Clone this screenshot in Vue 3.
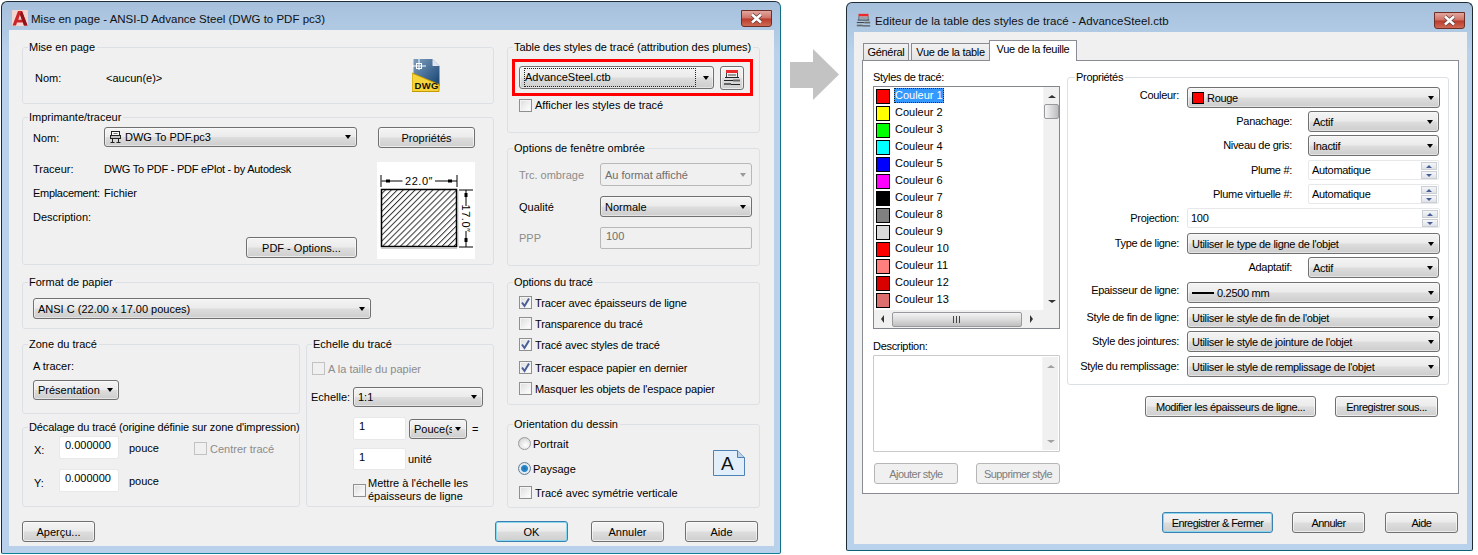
<script setup>
const swatches = ['#ff0000','#ffff00','#00ff00','#00ffff','#0000ff','#ff00ff','#000000','#808080','#d9d9d9','#ff0000','#ff7f7f','#d90000','#dd6f6f','#ffffff']
const colours = swatches.map((c, i) => ({ name: 'Couleur ' + (i + 1), c }))
const props = [
  { label: 'Couleur:', kind: 'combo', size: 'wide', val: 'Rouge', h: 24, lift: true, swatch: true },
  { label: 'Panachage:', kind: 'combo', size: 'narrow', val: 'Actif', h: 24 },
  { label: 'Niveau de gris:', kind: 'combo', size: 'narrow', val: 'Inactif', h: 25 },
  { label: 'Plume #:', kind: 'spin', size: 'narrow', val: 'Automatique', h: 24 },
  { label: 'Plume virtuelle #:', kind: 'spin', size: 'narrow', val: 'Automatique', h: 24 },
  { label: 'Projection:', kind: 'spin', size: 'wide', val: '100', h: 25 },
  { label: 'Type de ligne:', kind: 'combo', size: 'wide', val: "Utiliser le type de ligne de l'objet", h: 24 },
  { label: 'Adaptatif:', kind: 'combo', size: 'narrow', val: 'Actif', h: 25 },
  { label: 'Epaisseur de ligne:', kind: 'combo', size: 'wide', val: '0.2500 mm', h: 25, lift: true, line: true },
  { label: 'Style de fin de ligne:', kind: 'combo', size: 'wide', val: "Utiliser le style de fin de l'objet", h: 24 },
  { label: 'Style des jointures:', kind: 'combo', size: 'wide', val: "Utiliser le style de jointure de l'objet", h: 25 },
  { label: 'Style du remplissage:', kind: 'combo', size: 'wide', val: "Utiliser le style de remplissage de l'objet", h: 21 }
]
const traceOpts = [
  { t: 'Tracer avec épaisseurs de ligne', on: true },
  { t: 'Transparence du tracé', on: false },
  { t: 'Tracé avec styles de tracé', on: true },
  { t: 'Tracer espace papier en dernier', on: true, gap: true },
  { t: "Masquer les objets de l'espace papier", on: false }
]
</script>

<template>
  <div class="desk">
    <svg class="defs" width="0" height="0" aria-hidden="true">
      <symbol id="plotter" viewBox="0 0 13 13">
        <rect x="2.500" y=".5" width="8" height="4" fill="#fff" stroke="#222"/>
        <rect x="1.500" y="4.500" width="10" height="3" fill="#c4c4c4" stroke="#222"/>
        <path d="M3.500 7.500v4M9.500 7.500v4M1.500 11.500h4M7.500 11.500h4" fill="none" stroke="#222"/>
        <path d="M4.500 2.500h4" stroke="#777" fill="none"/>
      </symbol>
      <symbol id="plotter-red" viewBox="0 0 18 18">
        <rect x="3" y="1" width="12" height="3" fill="#ec2a2a"/>
        <path d="M3.500 4v4M14.500 4v4" stroke="#444" fill="none"/>
        <rect x="5" y="5" width="8" height="2" fill="#9a9a9a"/>
        <path d="M2 8.500h14" stroke="#222" fill="none"/>
        <path d="M1 11.500h9" stroke="#222" fill="none"/>
        <path d="M10 11.500h7" stroke="#666" stroke-width="2" fill="none"/>
        <path d="M1 15h7" stroke="#666" stroke-width="2" fill="none"/>
        <path d="M8 15.500h9" stroke="#222" fill="none"/>
      </symbol>
      <symbol id="tick" viewBox="0 0 13 13">
        <path d="M3 6.500 5.500 10 10 2.500" fill="none" stroke="#4a5f97" stroke-width="2"/>
      </symbol>
    </svg>

    <!-- LEFT WINDOW -->
    <section class="win win-a">
      <header class="titlebar tb-a">
        <svg class="app-logo" width="16" height="16" viewBox="0 0 16 16">
          <rect width="16" height="16" rx="1" fill="#f3d6d0"/>
          <path d="M0.500 15.500 6 1h4l5.500 14.500h-3.500l-1-3H5l-1 3Z" fill="#c8242a"/>
          <path d="M6.200 9.700h3.600L8 4.600Z" fill="#f4c9c4"/>
          <path d="M10 1l5.500 14.500h-3.500L8 4.600Z" fill="#8e1418"/>
        </svg>
        <span class="ttl">Mise en page - ANSI-D Advance Steel (DWG to PDF pc3)</span>
        <button class="close close-a"><svg width="15" height="11" viewBox="0 0 15 11"><path d="M3 1.500 12 9.500M12 1.500 3 9.500" stroke="#5a3c3c" stroke-width="4"/><path d="M3 1.500 12 9.500M12 1.500 3 9.500" stroke="#fff" stroke-width="2.600"/></svg></button>
      </header>
      <div class="client client-a">
        <div class="cols">
          <div class="col col-l">
            <div class="grp g-page">
              <span class="legend">Mise en page</span>
              <span class="pg-lab">Nom:</span>
              <span class="pg-val">&lt;aucun(e)&gt;</span>
              <svg class="dwg" width="29" height="33" viewBox="0 0 29 33">
                <defs><linearGradient id="dwgb" x1="0" y1="0" x2="1" y2="1"><stop offset="0" stop-color="#7f9fbe"/><stop offset="1" stop-color="#123f70"/></linearGradient></defs>
                <path d="M1.500 0h19l7 7v20h-26Z" fill="url(#dwgb)"/>
                <path d="M20.500 0l7 7h-7Z" fill="#dfe6ee"/>
                <path d="M7 0v11M0 7h14" stroke="#fff"/>
                <rect x="4.500" y="4.500" width="5" height="5" fill="none" stroke="#fff"/>
                <path d="M0 14 27 25.500V32.500H0Z" fill="#f7d53a" stroke="#c49a00"/>
                <text x="2.500" y="30" class="dwg-t">DWG</text>
              </svg>
            </div>

            <div class="grp g-printer">
              <span class="legend">Imprimante/traceur</span>
              <span class="lab pr-nom">Nom:</span>
              <div class="combo pr-combo"><svg class="pl-i" width="13" height="13"><use href="#plotter"/></svg><span class="cv">DWG To PDF.pc3</span><i class="caret"></i></div>
              <button class="btn pr-btn">Propriétés</button>
              <span class="lab pr-l2">Traceur:</span>
              <span class="lab pr-v2">DWG To PDF - PDF ePlot - by Autodesk</span>
              <span class="lab pr-l3">Emplacement:</span>
              <span class="lab pr-v3">Fichier</span>
              <span class="lab pr-l4">Description:</span>
              <button class="btn pr-opt">PDF - Options...</button>
              <svg class="preview" width="98" height="97" viewBox="0 0 98 97">
                <defs>
                  <pattern id="hatch" width="4.200" height="4.200" patternUnits="userSpaceOnUse" patternTransform="rotate(45)">
                    <rect width="4.200" height="4.200" fill="#fff"/><rect width="1" height="4.200" fill="#333"/>
                  </pattern>
                </defs>
                <rect width="98" height="97" fill="#fff"/>
                <rect x="4.500" y="27.500" width="75" height="57" fill="url(#hatch)" stroke="#000" stroke-width="1.500"/>
                <path d="M4 86.500h76M81 28v57" stroke="#000" stroke-width="1" fill="none" opacity=".2"/>
                <path d="M4 13v12M80 13v12M4.500 19h21M58 19h22M82 28h14M82 85h14M89 28v16M89 69v16" stroke="#000" fill="none"/>
                <rect x="9" y="17.500" width="4" height="3" fill="#000"/><rect x="71" y="17.500" width="4" height="3" fill="#000"/>
                <rect x="87.500" y="31" width="3" height="4" fill="#000"/><rect x="87.500" y="76" width="3" height="4" fill="#000"/>
                <text x="42" y="23" class="dim" text-anchor="middle">22.0″</text>
                <text class="dim" text-anchor="middle" transform="translate(85 56.500) rotate(90)">17.0″</text>
              </svg>
            </div>

            <div class="grp g-format">
              <span class="legend">Format de papier</span>
              <div class="combo fm-combo"><span class="cv">ANSI C (22.00 x 17.00 pouces)</span><i class="caret"></i></div>
            </div>

            <div class="split">
              <div class="col">
                <div class="grp g-zone">
                  <span class="legend">Zone du tracé</span>
                  <div class="lab zn-lab">A tracer:</div>
                  <div class="combo zn-combo"><span class="cv">Présentation</span><i class="caret"></i></div>
                </div>
                <div class="grp g-offset">
                  <span class="legend tight">Décalage du tracé (origine définie sur zone d'impression)</span>
                  <span class="lab of-l">X:</span><span class="input of-in">0.000000</span><span class="lab of-u">pouce</span>
                  <label class="chk of-chk off"><span class="box"></span><span>Centrer tracé</span></label>
                  <span class="lab of-l">Y:</span><span class="input of-in">0.000000</span><span class="lab of-u">pouce</span>
                </div>
              </div>
              <div class="grp g-scale">
                <span class="legend">Echelle du tracé</span>
                <label class="chk sc-fit off"><span class="box"></span><span>A la taille du papier</span></label>
                <div class="sc-row sc-r1"><span class="lab sc-lab">Echelle:</span><div class="combo sc-combo"><span class="cv">1:1</span><i class="caret"></i></div></div>
                <div class="sc-row sc-r2"><span class="input sc-in">1</span><div class="combo sc-unit"><span class="cv">Pouce(s)</span><i class="caret"></i></div><span class="lab sc-eq">=</span></div>
                <div class="sc-row sc-r3"><span class="input sc-in2">1</span><span class="lab sc-un">unité</span></div>
                <label class="chk sc-lw"><span class="box"></span><span class="two">Mettre à l'échelle les<br>épaisseurs de ligne</span></label>
              </div>
            </div>
          </div>

          <div class="col col-r">
            <div class="grp g-table">
              <span class="legend">Table des styles de tracé (attribution des plumes)</span>
              <div class="redbox">
                <div class="combo tb-combo"><span class="focus">AdvanceSteel.ctb</span><i class="caret"></i></div>
                <button class="btn tb-btn"><svg width="18" height="18"><use href="#plotter-red"/></svg></button>
              </div>
              <label class="chk tb-chk"><span class="box"></span><span>Afficher les styles de tracé</span></label>
            </div>

            <div class="grp g-shade">
              <span class="legend">Options de fenêtre ombrée</span>
              <span class="lab muted">Trc. ombrage</span>
              <div class="combo dis sh-h1"><span class="cv">Au format affiché</span><i class="caret"></i></div>
              <span class="lab">Qualité</span>
              <div class="combo sh-h2"><span class="cv">Normale</span><i class="caret"></i></div>
              <span class="lab muted">PPP</span>
              <span class="input dis sh-h3">100</span>
            </div>

            <div class="grp g-opts">
              <span class="legend">Options du tracé</span>
              <label v-for="o in traceOpts" :key="o.t" class="chk op-row" :class="{ 'op-gap': o.gap }">
                <span class="box"><svg v-if="o.on" width="13" height="13"><use href="#tick"/></svg></span><span>{{ o.t }}</span>
              </label>
            </div>

            <div class="grp g-orient">
              <span class="legend">Orientation du dessin</span>
              <div class="or-list">
                <label class="radio or-row"><span class="dot"></span><span>Portrait</span></label>
                <label class="radio or-row on"><span class="dot"></span><span>Paysage</span></label>
                <label class="chk or-row or-last"><span class="box"></span><span>Tracé avec symétrie verticale</span></label>
              </div>
              <svg class="a-doc" width="32" height="26" viewBox="0 0 32 26">
                <path d="M.5.500h24l7 7v18H.5Z" fill="#e2effa" stroke="#4f81b5"/>
                <path d="M24.500.500v7h7" fill="#bcd3e8" stroke="#4f81b5"/>
                <text x="8" y="19.500" class="a-t">A</text>
              </svg>
            </div>
          </div>
        </div>
        <footer class="foot foot-a">
          <button class="btn w73">Aperçu...</button>
          <button class="btn w73 dflt ok">OK</button>
          <button class="btn w73 g23">Annuler</button>
          <button class="btn w73 g21">Aide</button>
        </footer>
      </div>
    </section>

    <svg class="arrow" width="49" height="51" viewBox="0 0 49 51"><path d="M0 13h23V0l26 25.500L23 51V39H0Z" fill="#c3c3c3"/></svg>

    <!-- RIGHT WINDOW -->
    <section class="win win-b">
      <header class="titlebar tb-b">
        <svg class="tb-icon" width="15" height="15"><use href="#plotter-red"/></svg>
        <span class="ttl ttl-b">Editeur de la table des styles de tracé - AdvanceSteel.ctb</span>
        <button class="close close-b"><svg width="15" height="11" viewBox="0 0 15 11"><path d="M3 1.500 12 9.500M12 1.500 3 9.500" stroke="#5a3c3c" stroke-width="4"/><path d="M3 1.500 12 9.500M12 1.500 3 9.500" stroke="#fff" stroke-width="2.600"/></svg></button>
      </header>
      <div class="client client-b">
        <div class="tabs">
          <span class="tab t1">Général</span>
          <span class="tab t2">Vue de la table</span>
          <span class="tab t3">Vue de la feuille</span>
        </div>
        <div class="panel">
          <div class="p-left">
            <div class="p-lab">Styles de tracé:</div>
            <div class="list">
              <div class="list-items">
                <div v-for="(c, i) in colours" :key="c.name" class="li">
                  <span class="sw" :style="{ background: c.c }"></span>
                  <span v-if="i < 13" class="li-t" :class="{ sel: i === 0 }">{{ c.name }}</span>
                </div>
              </div>
              <div class="vbar">
                <i class="up"></i><span class="vthumb"></span><i class="dn dn-end"></i>
              </div>
              <div class="hbar">
                <i class="lf"></i><span class="hthumb">
                  <svg width="9" height="7"><path d="M.5 0v7M3.500 0v7M6.500 0v7" stroke="#444"/></svg>
                </span><i class="rt"></i>
              </div>
              <div class="corner"></div>
            </div>
            <div class="p-lab p-desc">Description:</div>
            <div class="descr"><div class="vbar dv"><i class="up dim-a"></i><i class="dn dn-end dim-a"></i></div></div>
            <div class="p-btns">
              <button class="btn off-btn">Ajouter style</button>
              <button class="btn off-btn">Supprimer style</button>
            </div>
          </div>
          <div class="p-right">
            <div class="grp g-props white">
              <span class="legend">Propriétés</span>
              <div v-for="r in props" :key="r.label" class="prow" :class="r.size" :style="{ height: r.h + 'px' }">
                <span class="plab" :class="{ lift: r.lift }">{{ r.label }}</span>
                <div v-if="r.kind === 'combo'" class="combo pctl">
                  <span v-if="r.swatch" class="rsw"></span>
                  <span v-if="r.line" class="rline"></span>
                  <span class="cv">{{ r.val }}</span><i class="caret"></i>
                </div>
                <div v-else class="input pctl spin">
                  <span>{{ r.val }}</span>
                  <span class="spins"><b class="s-up"></b><b class="s-dn"></b></span>
                </div>
              </div>
            </div>
            <div class="p-acts">
              <button class="btn act1">Modifier les épaisseurs de ligne...</button>
              <button class="btn act2">Enregistrer sous...</button>
            </div>
          </div>
        </div>
        <footer class="foot foot-b">
          <button class="btn dflt save">Enregistrer &amp; Fermer</button>
          <button class="btn w73 g19">Annuler</button>
          <button class="btn w73 g20">Aide</button>
        </footer>
      </div>
    </section>
  </div>
</template>

<style>
html, body { margin: 0; background: #fff; }
</style>

<style scoped>
* { box-sizing: border-box; }
.desk { display: flex; align-items: flex-start; width: 1478px; height: 555px; overflow: hidden; background: #fff;
  font: 11px/14px "Liberation Sans", Arial, sans-serif; color: #000; }
.defs { position: absolute; }
.arrow { flex: none; margin: 49px 7px 0 9px; }
button { font: inherit; color: inherit; padding: 0; }
.win { display: flex; flex-direction: column; border: 1px solid #1c2d38; border-radius: 6px 6px 2px 2px;
  background: linear-gradient(180deg, #a6c0dc 0, #b9d1ea 50px); flex: none; }
.win-a { width: 780px; height: 553px; margin: 1px 0 0 1px; padding: 0 6px 7px 7px; border-bottom-color: #0e7f97; border-right-color: #0e6f86; }
.win-b { width: 627px; height: 549px; margin-top: 2px; padding: 0 5px 6px 7px; border-bottom-color: #0e5f76; }
.titlebar { display: flex; align-items: flex-start; flex: none; }
.tb-a { height: 28px; margin-left: -7px; margin-right: -6px; padding: 8px 8px 0 10px; }
.tb-b { height: 29px; margin-left: -7px; margin-right: -5px; padding: 9px 7px 0 9px; }
.app-logo { flex: none; margin-right: 3px; }
.tb-icon { flex: none; margin: 1px 4px 0 0; }
.ttl { font-size: 11.500px; line-height: 18px; flex: 1; color: #111; }
.ttl-b { letter-spacing: .05px; }
.close { flex: none; width: 31px; height: 17px; display: flex; align-items: center; justify-content: center;
  border: 1px solid #6c2f27; border-radius: 0 0 3px 3px;
  background: linear-gradient(180deg, #e2a79e 0, #cf7065 48%, #b83a2b 52%, #cf6a55 100%); }
.client { flex: 1; background: #f0f0f0; display: flex; flex-direction: column; min-height: 0; }
.client-a { padding: 17px 14px 0 13px; }
.client-b { padding: 8px 8px 0 8px; letter-spacing: -.3px; }

.cols { display: grid; grid-template-columns: 472px 253px; column-gap: 13px; }
.col { display: flex; flex-direction: column; }

.grp { position: relative; border: 1px solid #dce0e5; border-radius: 3px; background: #f0f0f0; flex: none; }
.legend { position: absolute; top: -8px; left: 5px; padding: 0 2px 0 1px; background: #f0f0f0; white-space: nowrap; }
.tight { letter-spacing: -.13px; }
.white, .white .legend { background: #fff; }
.g-props .legend { left: 7px; }
.lab { white-space: nowrap; }
.muted { color: #8c8c8c; }

.g-page { height: 57px; display: flex; align-items: flex-start; padding: 23px 0 0 12px; }
.pg-lab { width: 71px; flex: none; }
.dwg { position: absolute; right: 52px; top: 11px; }
.dwg-t { font: bold 9.500px "Liberation Sans", sans-serif; fill: #111; letter-spacing: .3px; }
.dim { font: 11px "Liberation Sans", sans-serif; letter-spacing: .5px; }

.g-printer { height: 148px; margin-top: 13px; padding: 9px 0 0 10px; display: grid;
  grid-template-columns: 71px 253px 118px; grid-template-rows: 30px 24px 24px 24px 29px;
  align-items: center; }
.pr-nom { grid-area: 1 / 1; align-self: start; line-height: 22px; }
.pr-combo { grid-area: 1 / 2; height: 20px; align-self: start; padding-left: 4px; }
.pl-i { flex: none; margin-right: 3px; }
.pr-btn { grid-area: 1 / 3; width: 97px; height: 21px; margin-left: 21px; align-self: start; }
.pr-l2 { grid-area: 2 / 1; }
.pr-v2 { grid-area: 2 / 2; letter-spacing: -.25px; }
.pr-l3 { grid-area: 3 / 1; letter-spacing: -.3px; }
.pr-v3 { grid-area: 3 / 2; }
.pr-l4 { grid-area: 4 / 1; }
.preview { grid-area: 2 / 3 / span 4; margin: 5px 0 0 20px; align-self: start; }
.pr-opt { grid-area: 5 / 2; justify-self: end; align-self: end; width: 111px; height: 21px; }

.g-format { height: 47px; margin-top: 17px; padding: 15px 0 0 10px; }
.fm-combo { width: 338px; height: 21px; }

.split { display: flex; gap: 6px; margin-top: 15px; }
.split > .col { width: 278px; }
.g-zone { height: 70px; padding: 14px 0 0 10px; }
.zn-combo { width: 86px; height: 20px; margin-top: 7px; }
.g-offset { height: 80px; margin-top: 13px; padding: 8px 0 0 11px; display: grid;
  grid-template-columns: 25px 60px 75px auto; grid-template-rows: 23px 23px; row-gap: 10px; align-items: center; justify-content: start; }
.of-l { padding-top: 5px; }
.of-in { height: 23px; }
.of-u { padding: 1px 0 0 10px; }
.of-chk { grid-column: 4; margin-top: 2px; }
.g-scale { width: 188px; height: 163px; display: flex; flex-direction: column; }
.sc-fit { margin: 17px 0 0 5px; height: 13px; }
.sc-row { display: flex; align-items: center; }
.sc-r1 { margin: 12px 0 0 4px; }
.sc-lab { width: 42px; flex: none; }
.sc-combo { width: 130px; height: 20px; }
.sc-r2 { margin: 10px 0 0 46px; }
.sc-in { width: 53px; height: 23px; }
.sc-unit { width: 58px; height: 20px; margin-left: 3px; }
.sc-unit .cv { width: 38px; overflow: hidden; }
.sc-unit .caret { margin-left: auto; }
.sc-eq { margin-left: 5px; }
.sc-r3 { margin: 8px 0 0 46px; }
.sc-in2 { width: 53px; height: 22px; }
.sc-un { margin-left: 2px; }
.sc-lw { margin: 7px 0 0 46px; }
.sc-lw .box { margin-right: 2px; }
.two { line-height: 13px; }

.g-table { height: 86px; padding: 11px 0 0 4px; }
.g-table .legend { letter-spacing: -.04px; }
.redbox { width: 241px; height: 37px; border: 3px solid #f00; display: flex; align-items: center; padding-left: 4px; }
.tb-combo { width: 195px; height: 23px; padding-left: 2px; }
.focus { width: 172px; height: 19px; line-height: 17px; border: 1px dotted #222; flex: none; }
.tb-combo .caret { margin-left: 7px; }
.tb-btn { width: 24px; height: 24px; margin-left: 6px; }
.tb-chk { margin: 2px 0 0 7px; }

.g-shade { height: 118px; margin-top: 15px; padding: 14px 0 0 11px; display: grid;
  grid-template-columns: 81px 152px; grid-template-rows: 23px 21px 22px; row-gap: 10px; align-items: center; }
.sh-h1 { height: 23px; }
.sh-h2 { height: 21px; }
.sh-h3 { height: 22px; padding-left: 6px; }

.g-opts { height: 123px; margin-top: 16px; padding: 9px 0 0 11px; letter-spacing: -.12px; }
.op-row { height: 21px; }
.op-gap { margin-top: 2px; }

.g-orient { height: 84px; margin-top: 19px; padding: 6px 14px 0 10px; display: flex; justify-content: space-between; }
.or-row { height: 25px; }
.or-last { height: 23px; margin-left: 1px; }
.a-doc { margin-top: 19px; }
.a-t { font: 19px "Liberation Sans", sans-serif; fill: #111; }

.chk, .radio { display: flex; align-items: center; white-space: nowrap; }
.box { flex: none; width: 13px; height: 13px; margin-right: 3px; border: 1px solid #8e8f8f;
  background: linear-gradient(135deg, #dcdcdc, #f6f6f6 70%, #fff); box-shadow: inset 0 0 0 1px #f4f4f4; display: block; }
.box svg { display: block; margin: -1px; }
.off { color: #8c8c8c; }
.off .box { border-color: #c2c2c2; background: #f0f0f0; box-shadow: none; }
.dot { flex: none; width: 13px; height: 13px; margin-right: 2px; border-radius: 50%; border: 1px solid #9a9a9a;
  background: radial-gradient(circle at 60% 65%, #fff 0, #e4e4e4 55%, #bdbdbd 100%); }
.radio.on .dot { background: radial-gradient(circle, #1f6ea8 0, #2b8fd4 40%, #e8eef2 50%, #d0d0d0 100%); border-color: #5f7f9a; }

.combo { display: flex; align-items: center; padding-left: 4px; padding-right: 5px; border: 1px solid #707070; border-radius: 3px; white-space: nowrap; min-width: 0;
  background: linear-gradient(180deg, #f4f4f4 0, #ebebeb 48%, #dddddd 52%, #cdcdcd 100%); box-shadow: inset 0 0 0 1px rgba(255,255,255,.45); }
.cv { white-space: nowrap; }
.caret { margin-left: auto; width: 0; height: 0; flex: none; border: 3.500px solid transparent; border-top: 4px solid #000; border-bottom: 0; }
.combo.dis { background: #f0f0f0; border-color: #b8b8b8; color: #6d6d6d; box-shadow: none; }
.combo.dis .caret { border-top-color: #9a9a9a; }

.input { display: flex; align-items: flex-start; padding: 1px 0 0 5px; background: #fff; border: 1px solid #e6e8ea; border-radius: 2px; white-space: nowrap; }
.input.dis { background: #f0f0f0; border-color: #b8b8b8; color: #6d6d6d; }

.btn { display: inline-flex; align-items: center; justify-content: center; border: 1px solid #707070; border-radius: 3px;
  background: linear-gradient(180deg, #f4f4f4 0, #ebebeb 48%, #dddddd 52%, #cfcfcf 100%); box-shadow: inset 0 0 0 1px rgba(255,255,255,.6); white-space: nowrap; }
.dflt { border-color: #3c7fb1; box-shadow: inset 0 0 0 1px #88d8ee; }

.foot { display: flex; flex: none; }
.foot-a { margin: 13px 2px 0 0; }
.w73 { width: 73px; height: 21px; }
.ok { margin-left: auto; }
.g23 { margin-left: 23px; }
.g21 { margin-left: 21px; }
.g19 { margin-left: 19px; }
.g20 { margin-left: 20px; }
.foot-b { margin: 18px 1px 0 0; justify-content: flex-end; }
.client-b .btn { letter-spacing: -.55px; }
.save { width: 111px; height: 21px; }

.tabs { display: flex; align-items: flex-end; height: 20px; margin-left: 1px; flex: none; }
.tab { display: flex; align-items: center; justify-content: center; border: 1px solid #898c95; border-bottom: 0; background: linear-gradient(180deg, #f2f2f2, #e3e3e3); height: 17px; }
.t1 { width: 46px; }
.t2 { width: 78px; margin-left: 2px; border-right: 0; }
.t3 { width: 88px; height: 21px; background: #fff; margin-bottom: -1px; position: relative; z-index: 1; padding-bottom: 4px; }
.panel { width: 597px; height: 434px; border: 1px solid #898c95; background: #fff; display: flex; flex: none; padding-left: 10px; }
.p-left { width: 187px; flex: none; padding-top: 9px; }
.p-lab { height: 14px; margin-bottom: 2px; }
.list { height: 243px; border: 1px solid #82878f; display: grid; grid-template-columns: 1fr 16px; grid-template-rows: 1fr 18px; overflow: hidden; }
.list-items { padding: 1px 0 0 2px; overflow: hidden; letter-spacing: 0; }
.li { display: flex; align-items: center; height: 17px; }
.sw { flex: none; width: 14px; height: 15px; border: 1px solid #000; margin-right: 4px; }
.li-t { height: 15px; line-height: 14px; padding: 0 1px; white-space: nowrap; margin-bottom: 2px; }
.sel { background: #3399ff; color: #fff; outline: 1px dotted #222; outline-offset: -1px; }
.vbar { background: #f0f0f0; border-left: 1px solid #f5f5f5; display: flex; flex-direction: column; align-items: center; }
.up, .dn, .lf, .rt { display: block; width: 0; height: 0; border: 4px solid transparent; flex: none; }
.up { border-top: 0; border-bottom: 3px solid #333; margin-top: 8px; }
.dn { border-bottom: 0; border-top: 3px solid #333; }
.dn-end { margin: auto 0 7px; }
.dim-a.up { border-bottom-color: #a0a0a0; }
.dim-a.dn { border-top-color: #a0a0a0; }
.vthumb { width: 15px; height: 15px; margin-top: 6px; border: 1px solid #97999c; border-radius: 2px; background: linear-gradient(90deg, #f5f5f5, #d4d4d4 60%, #bdbdbd); }
.hbar { background: #f0f0f0; display: flex; align-items: center; padding-left: 7px; }
.lf { border-left: 0; border-right: 3px solid #333; }
.rt { border-right: 0; border-left: 3px solid #333; margin-left: 8px; }
.hthumb { width: 130px; height: 15px; margin-left: 8px; border: 1px solid #97999c; border-radius: 2px; display: flex; align-items: center; justify-content: center; background: linear-gradient(180deg, #f3f3f3, #dcdcdc 50%, #bfbfbf); }
.corner { background: #f0f0f0; }
.p-desc { margin-top: 10px; }
.descr { height: 97px; border: 1px solid #c8cacc; display: flex; justify-content: flex-end; border-radius: 1px; padding: 1px; }
.dv { width: 16px; }
.p-btns { display: flex; justify-content: space-between; margin-top: 11px; padding-left: 1px; }
.off-btn { width: 84px; height: 21px; color: #7d7d7d; background: #f0f0f0; border-color: #b6b6b6; box-shadow: none; }

.p-right { margin-left: 7px; padding-top: 16px; width: 383px; flex: none; }
.g-props { width: 382px; height: 308px; padding-top: 9px; }
.prow { display: flex; align-items: flex-start; }
.plab { text-align: right; line-height: 20px; white-space: nowrap; flex: none; }
.lift { margin-top: -2px; }
.wide .plab { width: 111px; margin-right: 8px; }
.narrow .plab { width: 224px; margin-right: 16px; }
.wide .pctl { width: 253px; }
.narrow .pctl { width: 131px; }
.pctl { height: 21px; }
.spin { position: relative; height: 20px; padding: 2px 0 0 3px; }
.spins { position: absolute; right: 1px; top: 1px; width: 16px; height: 17px; display: flex; flex-direction: column; gap: 1px; }
.spins b { flex: 1; display: flex; align-items: center; justify-content: center; background: linear-gradient(180deg, #f4f6f8, #dfe3e8); border: 1px solid #cbced2; }
.s-up::before, .s-dn::before { content: ""; width: 0; height: 0; border: 3px solid transparent; }
.s-up::before { border-top: 0; border-bottom: 3px solid #4a5f97; }
.s-dn::before { border-bottom: 0; border-top: 3px solid #4a5f97; }
.rsw { width: 12px; height: 12px; background: #f00; border: 1px solid #000; margin-right: 3px; flex: none; }
.rline { width: 22px; height: 2px; background: #000; margin-right: 3px; flex: none; }
.p-acts { display: flex; margin-top: 11px; padding-left: 78px; }
.act1 { width: 171px; height: 21px; }
.client-b .act1 { letter-spacing: -.4px; }
.act2 { width: 103px; height: 21px; margin-left: 19px; }
.client-b .act2 { letter-spacing: -.45px; }
</style>
